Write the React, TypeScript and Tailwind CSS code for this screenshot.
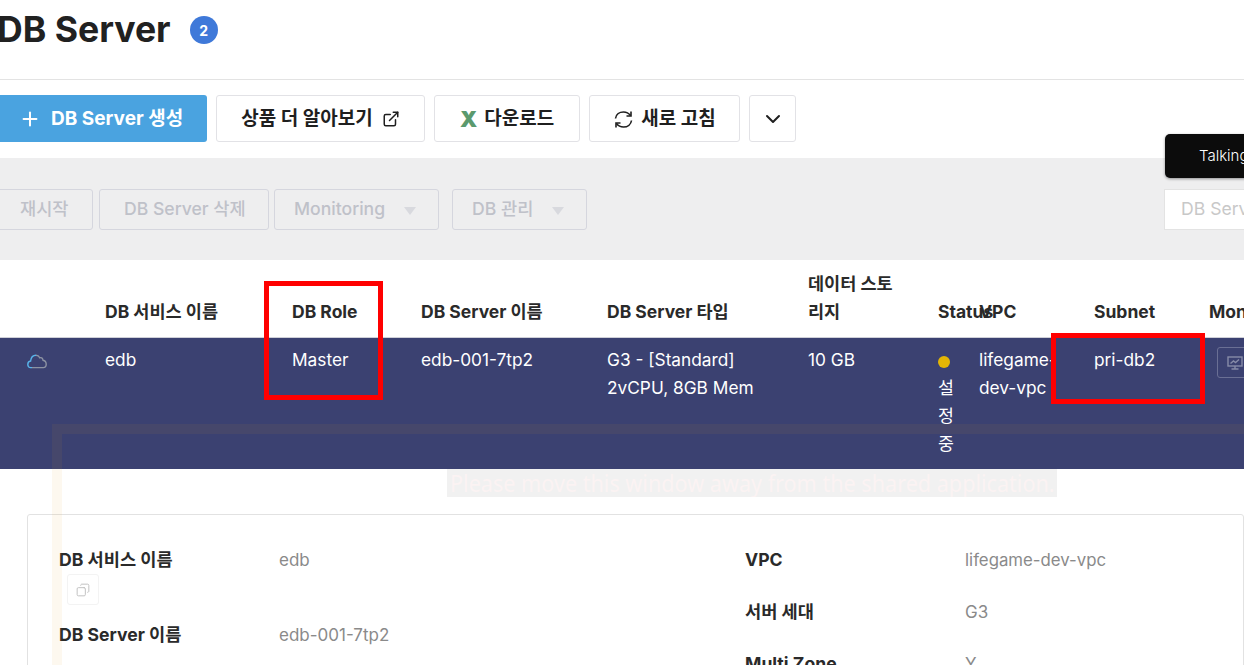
import React from "react";
import { Plus, ExternalLink, ChevronDown, Copy } from "lucide-react";

const font = { fontFamily: '"Inter", "Noto Sans CJK KR", sans-serif' };

function TopBtn({ className, children }: { className: string; children: React.ReactNode }) {
  return (
    <button className={`h-[47px] pt-[1px] rounded-[3px] border border-[#e2e2e6] bg-white flex items-center justify-center text-[19px] font-bold text-[#1f1f1f] ${className}`}>
      {children}
    </button>
  );
}

function DisBtn({ className, children, caret }: { className: string; children: React.ReactNode; caret?: boolean }) {
  return (
    <div className={`h-[41px] pt-[1px] shrink-0 rounded-[3px] border border-[#d5d6de] flex items-center text-[17.6px] text-[#bfc1c9] font-medium whitespace-nowrap ${className}`}>
      <span>{children}</span>
      {caret && <span className="ml-[19px] w-0 h-0 border-x-[6px] border-x-transparent border-t-[8px] border-t-[#d8d9de] mt-[2px]" />}
    </div>
  );
}

const grid = "grid grid-cols-[105px_187px_129px_186px_201px_130px_41px_115px_115px_60px]";

export default function App() {
  return (
    <div style={font} className="relative w-[1244px] h-[665px] overflow-hidden bg-white text-[17px]">
      <header className="h-[80px] border-b border-[#e3e3e3] flex items-center -ml-[3px] pb-[19px]">
        <h1 className="text-[35.6px] leading-none font-bold text-[#212121]">DB Server</h1>
        <span className="ml-[19px] w-[28px] h-[28px] rounded-full bg-[#3f79d9] text-white text-[14px] font-bold flex items-center justify-center">2</span>
      </header>

      <div className="flex gap-[9px] mt-[15px] h-[47px] -ml-[10px]">
        <button className="w-[217px] h-[47px] pt-[1px] rounded-[3px] bg-[#4aa3e0] text-white text-[19px] font-bold flex items-center pl-[28px] whitespace-nowrap">
          <Plus size={22} strokeWidth={2.2} className="mr-[10px] ml-[1px]" />
          DB Server 생성
        </button>
        <TopBtn className="w-[209px] gap-[9px]">
          상품 더 알아보기
          <ExternalLink size={18} strokeWidth={2} />
        </TopBtn>
        <TopBtn className="w-[146px] gap-[7px]">
          <span className="text-[#5b9a6e] text-[22px] font-black">X</span>
          다운로드
        </TopBtn>
        <TopBtn className="w-[151px] gap-[7px]">
          <svg width="21" height="21" viewBox="0 0 21 21" fill="none" stroke="#1f1f1f" strokeWidth="1.6">
            <path d="M2.5 9.5C3 5.5 6.5 3 10.5 3C13.5 3 16 4.5 17.5 6.5" />
            <path d="M18 2.5V7H13.5" />
            <path d="M18.5 11.5C18 15.5 14.5 18 10.5 18C7.5 18 5 16.5 3.5 14.5" />
            <path d="M3 18.5V14H7.5" />
          </svg>
          새로 고침
        </TopBtn>
        <TopBtn className="w-[47px]">
          <ChevronDown size={24} strokeWidth={2} />
        </TopBtn>
      </div>

      <section className="h-[102px] mt-[16px] bg-[#eeeeef] flex items-center">
        <DisBtn className="-ml-[10px] w-[103px] pl-[29px]">재시작</DisBtn>
        <DisBtn className="ml-[6px] w-[170px] pl-[24px]">DB Server 삭제</DisBtn>
        <DisBtn className="ml-[5px] w-[165px] pl-[19px]" caret>Monitoring</DisBtn>
        <DisBtn className="ml-[13px] w-[135px] pl-[19px]" caret>DB 관리</DisBtn>
        <div className="ml-[577px] w-[120px] pt-[1px] shrink-0 h-[41px] bg-white border border-[#e3e3e3] flex items-center pl-[16px] text-[17.6px] text-[#c8c8c8] whitespace-nowrap">
          DB Server
        </div>
      </section>

      <div className={`${grid} h-[77px] items-center font-bold text-[#2a2a2a] text-[17.5px] leading-[28px]`}>
        <div />
        <div className="mt-[26px] whitespace-nowrap">DB 서비스 이름</div>
        <div className="mt-[26px] whitespace-nowrap">DB Role</div>
        <div className="mt-[26px] whitespace-nowrap">DB Server 이름</div>
        <div className="mt-[26px] whitespace-nowrap">DB Server 타입</div>
        <div className="w-[92px] -mt-[2px]">데이터 스토리지</div>
        <div className="mt-[26px] whitespace-nowrap">Status</div>
        <div className="mt-[26px] whitespace-nowrap">VPC</div>
        <div className="mt-[26px] whitespace-nowrap">Subnet</div>
        <div className="mt-[26px] whitespace-nowrap">Monitoring</div>
      </div>

      <div className={`${grid} h-[132px] border-t-[1px] border-[#cfd0d8] bg-[#3b4171] text-white text-[17.3px] leading-[28px] pt-[8px]`}>
        <div className="pl-[27px] pt-[8px]">
          <svg width="20" height="15" viewBox="0 0 20 15" fill="none" strokeWidth="1.4">
            <path d="M9 1.2C10.8 1.2 12 2.2 12.8 3.8C14 3.2 15.8 4 16 6.2C18 6.6 19.2 8 19.2 10.2C19.2 12.2 18 13.6 16.2 13.6H5" stroke="#8d93a3" />
            <path d="M5 13.6H3.6C2 13.6 0.8 12.2 0.8 10.4C0.8 8.6 2 7.2 3.6 7C4 3.6 6 1.2 9 1.2" stroke="#58b4ea" />
          </svg>
        </div>
        <div>edb</div>
        <div>Master</div>
        <div>edb-001-7tp2</div>
        <div className="whitespace-nowrap">G3 - [Standard]<br />2vCPU, 8GB Mem</div>
        <div>10 GB</div>
        <div className="w-[18px]">
          <div className="w-[12px] h-[12px] rounded-full bg-[#e3b505] mt-[10px] mb-[6px]" />
          설정중
        </div>
        <div className="w-[80px]">lifegame-dev-vpc</div>
        <div>pri-db2</div>
        <div className="pt-[1px]">
          <div className="ml-[8px] w-[36px] h-[31px] rounded-[3px] border border-[#6a6f94] flex items-center justify-center">
            <svg width="16" height="16" viewBox="0 0 16 16" fill="none" stroke="#878ba8" strokeWidth="1.4">
              <rect x="1" y="2" width="14" height="9" />
              <path d="M8 11V14M4.5 14H11.5M3.5 8.5L6.5 6L8.5 7.5L12 4.5" />
            </svg>
          </div>
        </div>
      </div>

      <div className="ml-[27px] mt-[45px] h-[300px] border border-[#e2e2e2] rounded-t-[3px] grid grid-cols-[686px_1fr] pl-[31px] pt-[31px] text-[17px] leading-[28px]">
        <div>
          <div className="flex">
            <div className="w-[220px] text-[17.6px] font-bold text-[#2a2a2a] whitespace-nowrap">DB 서비스 이름</div>
            <div className="text-[#8a8a8a]">edb</div>
          </div>
          <div className="ml-[8px] w-[32px] h-[31px] border border-[#f3f3f3] rounded-[3px] flex items-center justify-center">
            <Copy size={14} strokeWidth={1.6} color="#bdbdbd" className="-scale-x-100" />
          </div>
          <div className="flex mt-[16px]">
            <div className="w-[220px] text-[17.6px] font-bold text-[#2a2a2a] whitespace-nowrap">DB Server 이름</div>
            <div className="text-[#8a8a8a]">edb-001-7tp2</div>
          </div>
        </div>
        <div className="flex flex-col gap-[24px]">
          <div className="flex">
            <div className="w-[220px] text-[17.6px] font-bold text-[#2a2a2a]">VPC</div>
            <div className="text-[#8a8a8a] text-[16.8px]">lifegame-dev-vpc</div>
          </div>
          <div className="flex">
            <div className="w-[220px] text-[17.6px] font-bold text-[#2a2a2a]">서버 세대</div>
            <div className="text-[#8a8a8a]">G3</div>
          </div>
          <div className="flex">
            <div className="w-[220px] text-[17.6px] font-bold text-[#2a2a2a]">Multi Zone</div>
            <div className="text-[#8a8a8a]">Y</div>
          </div>
        </div>
      </div>

      {/* screen-share residue overlays */}
      <div className="absolute left-[52px] top-[424px] w-[1192px] h-[241px] border-l-[10px] border-t-[10px] border-l-[#e89b1c]/[0.07] border-t-[#e89b1c]/[0.07] pointer-events-none" />
      <div className="absolute left-[447px] top-[469px] w-[610px] h-[28px] bg-[#f1f1f1] text-[#fbf3f3] text-[24px] leading-[28px] whitespace-nowrap overflow-hidden pl-[3px]" style={{ fontFamily: '"Noto Sans", sans-serif' }}>
        <span className="inline-block origin-left scale-x-[0.9]">Please move this window away from the shared application.</span>
      </div>

      <div className="absolute left-[1165px] top-[134px] w-[100px] h-[44px] rounded-[5px] bg-[#0c0c0c] shadow-[0_1px_3px_rgba(0,0,0,0.4)] text-white text-[15px] font-light leading-[44px] pl-[34px] whitespace-nowrap">
        Talking
      </div>

      {/* red annotation boxes */}
      <div className="absolute left-[264px] top-[281px] w-[119px] h-[119px] border-[5px] border-[#ff0000]" />
      <div className="absolute left-[1051px] top-[333px] w-[154px] h-[71px] border-[5px] border-[#ff0000]" />
    </div>
  );
}
